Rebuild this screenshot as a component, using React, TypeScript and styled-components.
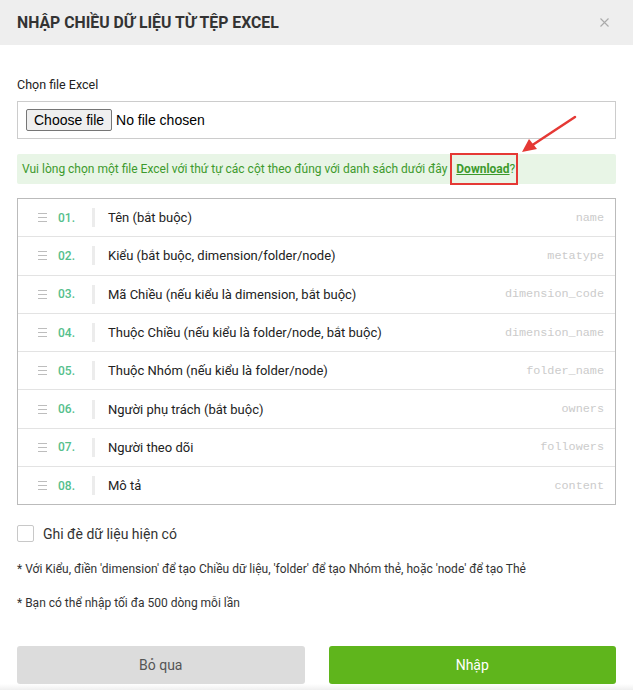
import { FC, useCallback, useState } from "react";
import styled, { createGlobalStyle } from "styled-components";

const GlobalStyle = createGlobalStyle`
  html, body {
    margin: 0;
    padding: 0;
    background: #fff;
    overflow: hidden;
  }
  body {
    font-family: Roboto, "Noto Sans", sans-serif;
    color: #333;
  }
`;

interface Column {
  label: string
  key: string
}

const columns: Column[] = [
  { label: "Tên (bắt buộc)", key: "name" },
  { label: "Kiểu (bắt buộc, dimension/folder/node)", key: "metatype" },
  { label: "Mã Chiều (nếu kiểu là dimension, bắt buộc)", key: "dimension_code" },
  { label: "Thuộc Chiều (nếu kiểu là folder/node, bắt buộc)", key: "dimension_name" },
  { label: "Thuộc Nhóm (nếu kiểu là folder/node)", key: "folder_name" },
  { label: "Người phụ trách (bắt buộc)", key: "owners" },
  { label: "Người theo dõi", key: "followers" },
  { label: "Mô tả", key: "content" },
];

const Handle: FC = () => (
  <StyledHandle width="9" height="9" viewBox="0 0 9 9">
    <rect x="0" y="0" width="9" height="1" fill="#bdbdbd" />
    <rect x="0" y="4" width="9" height="1" fill="#bdbdbd" />
    <rect x="0" y="8" width="9" height="1" fill="#bdbdbd" />
  </StyledHandle>
);

const App: FC = () => {
  const [fileName, setFileName] = useState<string>("");

  const handleFile = useCallback(event => {
    const file = event.target.files?.[0];
    setFileName(file ? file.name : "");
  }, []);

  return (
    <>
      <GlobalStyle />
      <StyledModal>
        <StyledHeader>
          <StyledTitle>NHẬP CHIỀU DỮ LIỆU TỪ TỆP EXCEL</StyledTitle>
          <StyledClose aria-label="close">
            <svg width="9" height="9" viewBox="0 0 9 9">
              <path d="M0.5 0.5 L8.5 8.5 M8.5 0.5 L0.5 8.5" stroke="#aaa" strokeWidth="1.1" />
            </svg>
          </StyledClose>
        </StyledHeader>

        <StyledBody>
          <StyledLabel htmlFor="excelFile">Chọn file Excel</StyledLabel>
          <StyledFileBox>
            <StyledHiddenInput id="excelFile" type="file" onChange={handleFile} />
            <StyledFileButton htmlFor="excelFile">Choose file</StyledFileButton>
            <StyledFileName>{fileName || "No file chosen"}</StyledFileName>
          </StyledFileBox>

          <StyledAlert>
            Vui lòng chọn một file Excel với thứ tự các cột theo đúng với danh sách dưới đây{" "}
            <StyledMarked>
              <StyledLink href="#">Download</StyledLink>?
            </StyledMarked>
            <StyledArrow width="60" height="40" viewBox="0 0 60 40">
              <line x1="56" y1="2" x2="12" y2="31" stroke="#e53935" strokeWidth="2.5" strokeLinecap="round" />
              <polygon points="3,37 10,24 18,34" fill="#e53935" />
            </StyledArrow>
          </StyledAlert>

          <StyledList>
            {columns.map((column, index) => (
              <StyledRow key={column.key}>
                <Handle />
                <StyledNumber>{String(index + 1).padStart(2, "0")}.</StyledNumber>
                <StyledDivider />
                <StyledColumnLabel>{column.label}</StyledColumnLabel>
                <StyledKey>{column.key}</StyledKey>
              </StyledRow>
            ))}
          </StyledList>

          <StyledCheckRow>
            <StyledCheckbox type="checkbox" />
            <span>Ghi đè dữ liệu hiện có</span>
          </StyledCheckRow>

          <StyledNote>* Với Kiểu, điền 'dimension' để tạo Chiều dữ liệu, 'folder' để tạo Nhóm thẻ, hoặc 'node' để tạo Thẻ</StyledNote>
          <StyledNote>* Bạn có thể nhập tối đa 500 dòng mỗi lần</StyledNote>
        </StyledBody>

        <StyledFooter>
          <StyledButton type="button">Bỏ qua</StyledButton>
          <StyledButton type="button" primary>Nhập</StyledButton>
        </StyledFooter>
      </StyledModal>
    </>
  );
};

const StyledModal = styled.div`
  width: 633px;
  height: 690px;
  display: flex;
  flex-direction: column;
  background: #fff;
`;

const StyledHeader = styled.div`
  height: 45px;
  flex-shrink: 0;
  display: flex;
  align-items: center;
  justify-content: space-between;
  padding: 0 17px;
  background: #eeeeee;
`;

const StyledTitle = styled.h1`
  margin: 0;
  font-size: 15.8px;
  font-weight: 700;
  color: #333;
`;

const StyledClose = styled.button`
  border: 0;
  background: transparent;
  padding: 0;
  margin-right: 7px;
  display: flex;
  cursor: pointer;
`;

const StyledBody = styled.div`
  padding: 32px 17px 0;
  display: flex;
  flex-direction: column;
`;

const StyledLabel = styled.label`
  display: block;
  font-size: 12.5px;
  font-weight: 400;
  color: #222;
  line-height: 16px;
  margin-bottom: 8px;
`;

const StyledFileBox = styled.div`
  height: 36px;
  border: 1px solid #ccc;
  display: flex;
  align-items: center;
  gap: 4px;
  padding: 0 8px;
  font-family: "Liberation Sans", Arial, sans-serif;
  font-size: 14px;
  color: #000;
`;

const StyledHiddenInput = styled.input`
  display: none;
`;

const StyledFileButton = styled.label`
  height: 22px;
  box-sizing: border-box;
  display: flex;
  align-items: center;
  padding: 0 7px;
  background: #efefef;
  border: 1px solid #767676;
  border-radius: 2px;
  cursor: pointer;
`;

const StyledFileName = styled.span`
  white-space: nowrap;
`;

const StyledAlert = styled.div`
  position: relative;
  margin-top: 15px;
  height: 30px;
  display: flex;
  align-items: center;
  padding: 0 5px;
  background: #e8f5e6;
  border-radius: 2px;
  font-size: 12px;
  color: #3d9a2c;
  white-space: pre;
`;

const StyledMarked = styled.span`
  position: relative;
  margin-left: 6px;

  &::after {
    content: "";
    position: absolute;
    top: -9px;
    bottom: -9px;
    left: -6px;
    right: -3px;
    border: 2px solid #e53935;
  }
`;

const StyledLink = styled.a`
  color: #3d9a2c;
  font-weight: 700;
  text-decoration: underline;
`;

const StyledArrow = styled.svg`
  position: absolute;
  left: 502px;
  top: -39px;
`;

const StyledList = styled.div`
  margin-top: 14px;
  border: 1px solid #bbb;
`;

const StyledRow = styled.div`
  height: 37.3px;
  display: flex;
  align-items: center;
  padding: 0 11px 0 20px;
  border-bottom: 1px solid #e3e3e3;

  &:last-child {
    border-bottom: 0;
  }
`;

const StyledHandle = styled.svg`
  flex-shrink: 0;
`;

const StyledNumber = styled.span`
  width: 34px;
  margin-left: 11px;
  font-size: 12px;
  font-weight: 500;
  color: #55c08c;
`;

const StyledDivider = styled.span`
  width: 3px;
  height: 19px;
  background: #ececec;
  margin-right: 13px;
`;

const StyledColumnLabel = styled.span`
  flex: 1;
  font-size: 13px;
  color: #222;
`;

const StyledKey = styled.span`
  font-family: "Liberation Mono", "DejaVu Sans Mono", monospace;
  font-size: 11.8px;
  color: #cbcbcb;
`;

const StyledCheckRow = styled.label`
  margin-top: 20px;
  display: flex;
  align-items: center;
  gap: 9px;
  font-size: 14px;
  color: #333;
`;

const StyledCheckbox = styled.input`
  appearance: none;
  margin: 0;
  width: 17px;
  height: 17px;
  border: 1px solid #c8c8c8;
  border-radius: 2px;
  background: #fff;
`;

const StyledNote = styled.p`
  margin: 20px 0 0;
  font-size: 12px;
  line-height: 14px;
  color: #333;
`;

const StyledFooter = styled.div`
  margin-top: auto;
  display: flex;
  gap: 24px;
  padding: 0 17px 6px;
  background: linear-gradient(to bottom, #fff 0, #fff 38px, #efefef 44px);
`;

const StyledButton = styled.button<{ primary?: boolean }>`
  flex: 1;
  height: 38px;
  border: 0;
  border-radius: 3px;
  font-family: Roboto, sans-serif;
  font-size: 14px;
  background: ${({ primary }) => (primary ? "#5fb51c" : "#dcdcdc")};
  color: ${({ primary }) => (primary ? "#fff" : "#555")};
  cursor: pointer;
`;

export default App;
